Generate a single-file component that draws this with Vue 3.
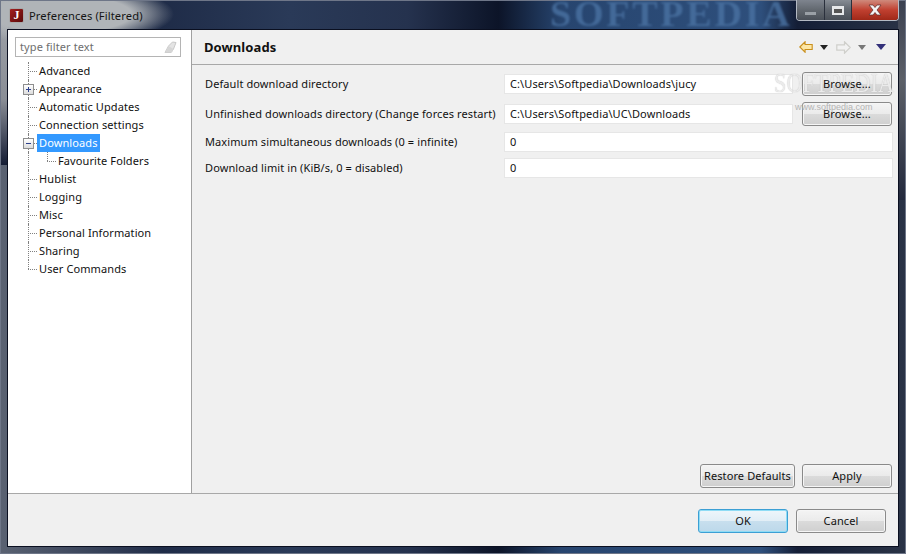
<script setup>
const tree = [
  { label: 'Advanced' },
  { label: 'Appearance', exp: '+' },
  { label: 'Automatic Updates' },
  { label: 'Connection settings' },
  { label: 'Downloads', exp: '-', sel: true },
  { label: 'Favourite Folders', sub: true },
  { label: 'Hublist' },
  { label: 'Logging' },
  { label: 'Misc' },
  { label: 'Personal Information' },
  { label: 'Sharing' },
  { label: 'User Commands', last: true }
]
</script>

<template>
  <div class="win">
    <header class="titlebar">
      <div class="appicon">J</div>
      <span class="wintitle">Preferences (Filtered)</span>
      <span class="wm-title">SOFTPEDIA</span>
      <div class="controls">
        <div class="ctl min"><i></i></div>
        <div class="ctl max"><i></i></div>
        <div class="ctl close">
          <svg width="16" height="12" viewBox="0 0 16 12"><path d="M2 1h4l2 2.500L10 1h4l-4 5 4 5h-4L8 8.500 6 11H2l4-5z" fill="#f4f4f4" stroke="#5a2a28" stroke-width=".7"/></svg>
        </div>
      </div>
    </header>

    <div class="client">
      <div class="main">
        <aside class="side">
          <div class="filter">
            <span>type filter text</span>
            <svg width="13" height="13" viewBox="0 0 13 13"><path d="M1 11.500 4.500 5 8.500 1 12 1.500 9.500 8 7 11.500z" fill="#e4e4e4" stroke="#c8c8c8"/><path d="M1 11.500h7L9.500 8 4.500 5z" fill="#d6d6d6"/></svg>
          </div>
          <ul class="tree">
            <li v-for="t in tree" :key="t.label" class="node" :class="{ sub: t.sub, last: t.last }">
              <span v-if="t.exp" class="exp">
                <svg width="9" height="9" viewBox="0 0 9 9"><path d="M2 4.500h5" stroke="#2c3f8c"/><path v-if="t.exp === '+'" d="M4.500 2v5" stroke="#2c3f8c"/></svg>
              </span>
              <span class="lab" :class="{ sel: t.sel }">{{ t.label }}</span>
            </li>
          </ul>
        </aside>

        <section class="page">
          <div class="pagehead">
            <h1>Downloads</h1>
            <div class="nav">
              <svg class="arrow" width="14" height="12" viewBox="0 0 15 13"><path d="M.8 6.500 6.500.8v3h7.700v5.400H6.500v3z" fill="#fde7a6" stroke="#c98f1c" stroke-width="1.200"/></svg>
              <i class="tri dark"></i>
              <svg class="arrow fw" width="15" height="13" viewBox="0 0 15 13"><path d="M14.200 6.500 8.500.8v3H.8v5.400h7.700v3z" fill="#f2f2f2" stroke="#cfcfcb" stroke-width="1.200"/></svg>
              <i class="tri grey"></i>
              <i class="tri navy"></i>
            </div>
          </div>
          <div class="form">
            <label>Default download directory</label>
            <div class="field">C:\Users\Softpedia\Downloads\jucy</div>
            <button class="btn"><span class="up">Browse...</span></button>
            <label>Unfinished downloads directory (Change forces restart)</label>
            <div class="field">C:\Users\Softpedia\UC\Downloads</div>
            <button class="btn"><span class="up">Browse...</span></button>
            <label>Maximum simultaneous downloads (0 = infinite)</label>
            <div class="field wide">0</div>
            <label>Download limit in (KiB/s, 0 = disabled)</label>
            <div class="field wide">0</div>
            <span class="wm-big">SOFTPEDIA</span>
            <span class="wm-small">www.softpedia.com</span>
          </div>
          <div class="pageactions">
            <button class="btn restore">Restore Defaults</button>
            <button class="btn apply">Apply</button>
          </div>
        </section>
      </div>
      <footer class="foot">
        <button class="btn ok">OK</button>
        <button class="btn cancel">Cancel</button>
      </footer>
    </div>
  </div>
</template>

<style>
html, body { margin: 0; background: #10192f; }
</style>

<style scoped>
* { box-sizing: border-box; }
.win {
  position: relative;
  width: 906px;
  height: 554px;
  display: flex;
  flex-direction: column;
  overflow: hidden;
  font: 11px "Noto Sans", sans-serif;
  letter-spacing: .1px;
  color: #111;
  background:
    radial-gradient(ellipse 112px 30px at 62px 14px, #b0b4b8 0 62%, rgba(150,158,170,0) 100%),
    linear-gradient(#a0a4aa, #8a8e96 60%, #141c34 100%) 0 0 / 8px 165px no-repeat,
    linear-gradient(#3a4050, #5c6068 40%, #22283c 100%) 898px 0 / 8px 200px no-repeat,
    linear-gradient(90deg, #5a6272 0, #1f2c48 18%, #2a3a58 32%, #25324e 45%, #0c1428 55%, #27456f 62%, #2e4f7c 84%, #141e36 88%, #2a3346 100%);
  box-shadow: inset 0 0 0 1px #6e7688;
}
.titlebar { position: relative; height: 30px; flex: none; display: flex; align-items: flex-start; padding: 8px 0 0 9px; }
.appicon {
  width: 15px; height: 15px; border-radius: 2px; background: linear-gradient(135deg, #a32020, #5a0808);
  border: 1px solid #a8a8a8; color: #fff; font: bold 12px/13px "Liberation Serif", serif; text-align: center;
}
.wintitle { margin-left: 5px; line-height: 15px; color: #151515; font-size: 11.200px; }
.wm-title {
  position: absolute; left: 550px; top: 1px; color: #4a72a2;
  font: bold 28px/28px "Liberation Serif", serif; letter-spacing: 2px; opacity: .8; filter: blur(.8px);
  transform: scale(1.36, 1.25); transform-origin: left center;
}
.controls { position: absolute; left: 796px; top: 0; display: flex; height: 21px; border: 1px solid #b4bac4; border-top: 0; border-radius: 0 0 4px 4px; overflow: hidden; }
.ctl { height: 100%; display: flex; align-items: center; justify-content: center; border-right: 1px solid #2a303c; }
.min { width: 28px; background: linear-gradient(#7e848e, #62686f 50%, #4a5058); }
.min i { width: 11px; height: 3px; background: #9aa0a6; margin-top: 7px; }
.max { width: 27px; background: linear-gradient(#868c94, #60666e 50%, #4a5058); }
.max i { width: 12px; height: 9px; border: 2px solid #e6e8ea; border-top-width: 3px; background: #555; }
.close { width: 46px; border-right: 0; background: linear-gradient(#cf8a7c, #c04030 50%, #a02818); }

.client { flex: 1; margin: 0 8px 8px; background: #f0f0f0; display: flex; flex-direction: column; outline: 1px solid #0a0f20; min-height: 0; }
.main { flex: 1; display: flex; min-height: 0; }
.side { width: 184px; flex: none; background: #fff; border-right: 1px solid #a0a0a0; padding: 7px 0 0 7px; }
.filter {
  width: 166px; height: 20px; border: 1px solid #b4b4b4; display: flex; align-items: center; justify-content: space-between;
  padding: 0 3px 0 4px; color: #6e6e6e; line-height: 18px;
}
.tree { list-style: none; margin: 5px 0 0; padding: 0; }
.node { position: relative; height: 18px; line-height: 18px; padding-left: 22px; }
.node::before { content: ""; position: absolute; left: 13px; top: 0; height: 18px; border-left: 1px dotted #808080; }
.node::after { content: ""; position: absolute; left: 13px; top: 9px; width: 9px; border-top: 1px dotted #808080; }
.node.last::before { height: 9px; }
.node.sub { padding-left: 41px; }
.node.sub::after { left: 32px; width: 9px; }
.node.sub .lab::before { content: ""; position: absolute; left: 32px; top: 0; height: 9px; border-left: 1px dotted #808080; }
.lab { display: inline-block; height: 18px; padding: 0 2px; color: #111; }
.lab.sel { background: #3399ff; color: #fff; position: relative; z-index: 1; }
.exp {
  position: absolute; z-index: 1; left: 8px; top: 4px; width: 11px; height: 11px; border: 1px solid #8e8e8e; background: linear-gradient(#fff, #dcdcdc);
  display: flex; align-items: center; justify-content: center;
}

.page { flex: 1; display: flex; flex-direction: column; min-width: 0; }
.pagehead { height: 35px; flex: none; border-bottom: 1px solid #a8a8a8; display: flex; align-items: center; justify-content: space-between; padding: 0 12px 0 12px; }
h1 { margin: 0; font: bold 13px "Noto Sans", sans-serif; color: #111; }
.nav { display: flex; align-items: center; }
.tri { width: 0; height: 0; border-style: solid; border-width: 5px 4px 0; border-color: transparent; margin-left: 7px; }
.tri.dark { border-top-color: #222; }
.tri.grey { border-top-color: #777; }
.tri.navy { border-width: 6px 5px 0; border-top-color: #33307a; margin-left: 10px; }
.arrow.fw { margin-left: 8px; }
.form {
  position: relative;
  display: grid; grid-template-columns: 299px 289px 100px; row-gap: 6px; padding: 7px 0 0 13px;
  grid-template-rows: 24px 24px 20px 20px; align-items: center;
}
.form label { white-space: nowrap; padding-bottom: 2px; }
.field { height: 20px; background: #fff; border: 1px solid #e6e6e6; padding-left: 5px; line-height: 18px; }
.field.wide { grid-column: 2 / span 2; line-height: 17px; }
.form .btn { margin-left: 9px; width: 90px; height: 24px; }
.up { position: relative; z-index: 2; }
.wm-big {
  position: absolute; left: 582px; top: 3px; font: 28px/30px "Liberation Serif", serif; color: rgba(255,255,255,.75);
  text-shadow: 0 0 1px #aaa; transform: scaleX(.79); transform-origin: left; pointer-events: none;
}
.wm-small { position: absolute; left: 603px; top: 36px; font: 9px/12px "Liberation Sans", sans-serif; letter-spacing: 0; color: #b4b4b4; }
.btn {
  font: 11px "Noto Sans", sans-serif; letter-spacing: .1px; color: #111; padding: 0 0 2px; border: 1px solid #8a8a8a; border-radius: 3px; height: 24px; white-space: nowrap;
  background: linear-gradient(#f4f4f4 0, #ebebeb 48%, #dbdbdb 50%, #cfcfcf 100%);
  box-shadow: inset 0 0 0 1px #f6f6f6;
}
.pageactions { margin-top: auto; display: flex; justify-content: flex-end; gap: 7px; padding: 0 6px 5px 0; }
.restore { width: 95px; }
.apply { width: 90px; }
.foot { height: 53px; flex: none; border-top: 1px solid #a8a8a8; display: flex; justify-content: flex-end; gap: 8px; padding: 15px 12px 0 0; }
.ok { width: 90px; border-color: #3c9fd4; background: linear-gradient(#eef6fb 0, #e2eef6 48%, #c8dfee 50%, #bcd8ea 100%); box-shadow: inset 0 0 0 1px #8fdcf5; }
.cancel { width: 90px; }
</style>
